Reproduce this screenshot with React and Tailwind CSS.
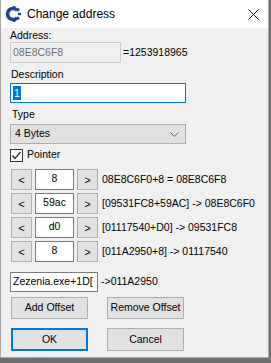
import { useState } from "react";

const rows = [
  { value: "8", text: "08E8C6F0+8 = 08E8C6F8" },
  { value: "59ac", text: "[09531FC8+59AC] -> 08E8C6F0" },
  { value: "d0", text: "[01117540+D0] -> 09531FC8" },
  { value: "8", text: "[011A2950+8] -> 01117540" },
];

function Logo() {
  const teeth = [100, 140, 180, 220, 260];
  return (
    <svg width="16" height="16" viewBox="0 0 16 16">
      {teeth.map((a) => (
        <rect
          key={a}
          x="6.8"
          y="0"
          width="2.4"
          height="3"
          fill="#1d3f8f"
          transform={`rotate(${a - 90} 8 8)`}
        />
      ))}
      <path
        d="M12.2 4.2 A5.6 5.6 0 1 0 12.2 11.8"
        fill="none"
        stroke="#1d3f8f"
        strokeWidth="3.4"
      />
      <path
        d="M11 5.3 A4 4 0 1 0 11 10.7"
        fill="none"
        stroke="#4d7fd0"
        strokeWidth="0.8"
      />
    </svg>
  );
}

function Btn({ children, className = "", focus = false }) {
  return (
    <div
      className={`flex items-center justify-center bg-[#e1e1e1] ${
        focus ? "border-2 border-[#0078d7]" : "border border-[#adadad]"
      } ${className}`}
    >
      {children}
    </div>
  );
}

export default function App() {
  const [checked, setChecked] = useState(true);

  return (
    <div className="w-[271px] h-[363px] bg-[#6f6f6f] overflow-hidden font-['Liberation_Sans',Arial,sans-serif] text-[10.5px] text-black">
      <div className="w-[269px] h-[358px] bg-[#f0f0f0] border-l border-r border-b border-[#a8a8a8] flex flex-col">
        {/* TITLE BAR */}
        <div className="h-[28px] bg-white flex items-center pl-[4px] pr-[9px]">
          <Logo />
          <span className="ml-[6px] text-[12px] text-black">Change address</span>
          <svg className="ml-auto" width="11" height="11" viewBox="0 0 11 11">
            <path d="M0.5 0.5 L10.5 10.5 M10.5 0.5 L0.5 10.5" stroke="#111" strokeWidth="1" />
          </svg>
        </div>

        {/* BODY */}
        <div className="px-[9px] flex flex-col">
          <div className="mt-[1px] h-[13px] leading-[13px]">Address:</div>
          <div className="flex items-center">
            <div className="w-[111px] h-[21px] border border-[#cccccc] bg-[#f0f0f0] text-[#6d6d6d] flex items-center pl-[2px]">
              08E8C6F8
            </div>
            <span className="ml-[2px]">=1253918965</span>
          </div>

          <div className="mt-[5px] h-[13px] leading-[13px] pl-[1px]">Description</div>
          <div className="mt-[2px] w-[176px] h-[20px] border border-[#0078d7] bg-white flex items-center pl-[2px]">
            <span className="bg-[#0078d7] text-white px-[1px] leading-[14px]">1</span>
          </div>

          <div className="mt-[5px] h-[13px] leading-[13px] pl-[2px]">Type</div>
          <div className="mt-[3px] w-[176px] h-[20px] border border-[#adadad] bg-[#e1e1e1] flex items-center pl-[4px] pr-[6px]">
            <span>4 Bytes</span>
            <svg className="ml-auto" width="9" height="5" viewBox="0 0 9 5">
              <path d="M0.5 0.5 L4.5 4.5 L8.5 0.5" fill="none" stroke="#606060" strokeWidth="1" />
            </svg>
          </div>

          <label className="mt-[4px] flex items-center h-[14px] cursor-default" onClick={() => setChecked(!checked)}>
            <span className="w-[13px] h-[13px] border border-[#333333] bg-white flex items-center justify-center">
              {checked && (
                <svg width="11" height="11" viewBox="0 0 11 11">
                  <path d="M1.5 5.5 L4 8.5 L9.5 2" fill="none" stroke="#333" strokeWidth="1.4" />
                </svg>
              )}
            </span>
            <span className="ml-[4px]">Pointer</span>
          </label>

          {/* OFFSETS */}
          <div className="mt-[7px] flex flex-col gap-[3px]">
            {rows.map((r, i) => (
              <div key={i} className="flex items-center h-[21px]">
                <Btn className="ml-[1px] w-[21px] h-[21px] pt-[3px]">&lt;</Btn>
                <div className="ml-[3px] w-[39px] h-[21px] border border-[#7a7a7a] bg-white flex justify-center pt-[1px]">
                  {r.value}
                </div>
                <Btn className="ml-[3px] w-[21px] h-[21px] pt-[3px]">&gt;</Btn>
                <span className="ml-[4px] whitespace-nowrap">{r.text}</span>
              </div>
            ))}
          </div>

          <div className="mt-[10px] flex items-center">
            <div className="w-[88px] h-[20px] border border-[#7a7a7a] bg-white flex items-center pl-[2px] overflow-hidden whitespace-nowrap">
              Zezenia.exe+1D[
            </div>
            <span className="ml-[3px]">-&gt;011A2950</span>
          </div>

          <div className="mt-[5px] flex gap-[19px] pl-[1px]">
            <Btn className="w-[77px] h-[22px]">Add Offset</Btn>
            <Btn className="w-[77px] h-[22px]">Remove Offset</Btn>
          </div>

          <div className="mt-[9px] flex gap-[19px] pl-[1px]">
            <Btn focus className="w-[77px] h-[23px]">OK</Btn>
            <Btn className="w-[77px] h-[23px]">Cancel</Btn>
          </div>
        </div>
      </div>
    </div>
  );
}
